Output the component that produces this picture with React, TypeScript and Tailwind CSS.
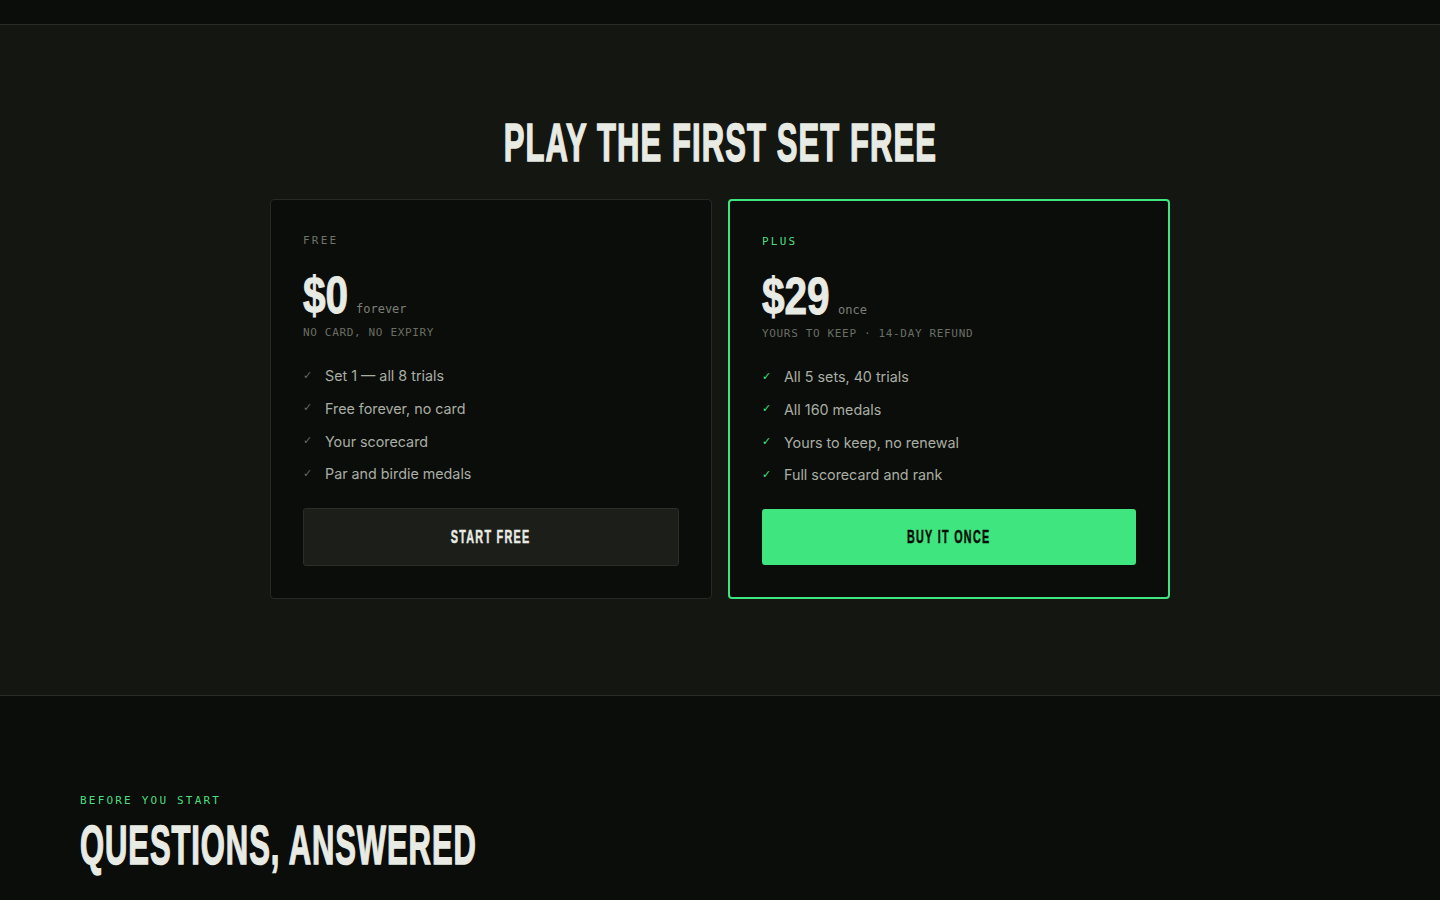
import React from "react";

const MONO = "font-['DejaVu_Sans_Mono','Liberation_Mono',monospace]";
const BODY = "font-['Inter','Noto_Sans',sans-serif]";
const DISPLAY = "font-['Liberation_Sans',Arial,sans-serif] font-bold";

function Feature({ text, plus }: { text: string; plus?: boolean }) {
  return (
    <li className="flex items-center h-6">
      <span
        className={`w-[22px] shrink-0 text-[11px] ${plus ? "text-[#3fe57f]" : "text-[#666a61]"} font-['DejaVu_Sans',sans-serif]`}
      >
        ✓
      </span>
      <span className={`${BODY} text-[14.3px] text-[#a9ada4]`}>{text}</span>
    </li>
  );
}

export default function App() {
  return (
    <div className="min-h-screen bg-[#0b0d0a] text-[#e8ebe3]">
      <div className="h-[25px] bg-[#0b0d0a] border-b border-[#2a2c27]" />

      <section className="bg-[#141611] border-b border-[#2a2c27] pt-[90px] pb-[96px]">
        <h2 className="text-center leading-none mb-[30px] h-[54px] flex justify-center items-center">
          <span
            className={`${DISPLAY} inline-block text-[53px] leading-none tracking-[0.035em] scale-x-[0.585] whitespace-nowrap [-webkit-text-stroke:1.5px_#e8ebe3]`}
          >
            PLAY THE FIRST SET FREE
          </span>
        </h2>

        <div className="mx-auto w-[900px] grid grid-cols-2 gap-4 items-stretch">
          {/* FREE */}
          <div className="bg-[#0b0d0a] border border-[#272a24] rounded-[4px] px-8 pt-[33px] pb-8">
            <div className={`${MONO} text-[11px] leading-4 tracking-[0.2em] text-[#6f7369]`}>FREE</div>
            <div className="mt-[20px] flex items-end h-[52px] leading-none">
              <span className="inline-block w-[45px] text-[52px] leading-none whitespace-nowrap">
                <span className={`${DISPLAY} inline-block origin-left scale-x-[0.78] [-webkit-text-stroke:1px_#e8ebe3]`}>$0</span>
              </span>
              <span className={`${MONO} ml-2 mb-[6px] text-[12px] leading-none text-[#7b7f76]`}>forever</span>
            </div>
            <div className={`${MONO} mt-[4px] text-[11px] leading-4 tracking-[0.06em] text-[#6a6e65]`}>
              NO CARD, NO EXPIRY
            </div>
            <ul className="mt-[23px] flex flex-col gap-[8.7px]">
              <Feature text="Set 1 — all 8 trials" />
              <Feature text="Free forever, no card" />
              <Feature text="Your scorecard" />
              <Feature text="Par and birdie medals" />
            </ul>
            <button className="mt-[22px] w-full h-[58px] rounded-[3px] bg-[#1b1e19] border border-[#2c2f29] flex items-center justify-center">
              <span className={`${DISPLAY} inline-block text-[18px] tracking-[0.12em] scale-x-[0.6] whitespace-nowrap text-[#e8ebe3] [-webkit-text-stroke:0.5px_#e8ebe3]`}>
                START FREE
              </span>
            </button>
          </div>

          {/* PLUS */}
          <div className="bg-[#0b0d0a] border-2 border-[#3fe57f] rounded-[4px] px-8 pt-[33px] pb-8">
            <div className={`${MONO} text-[11px] leading-4 tracking-[0.2em] text-[#4ade80]`}>PLUS</div>
            <div className="mt-[20px] flex items-end h-[52px] leading-none">
              <span className="inline-block w-[68px] text-[52px] leading-none whitespace-nowrap">
                <span className={`${DISPLAY} inline-block origin-left scale-x-[0.78] [-webkit-text-stroke:1px_#e8ebe3]`}>$29</span>
              </span>
              <span className={`${MONO} ml-2 mb-[6px] text-[12px] leading-none text-[#7b7f76]`}>once</span>
            </div>
            <div className={`${MONO} mt-[4px] text-[11px] leading-4 tracking-[0.06em] text-[#6a6e65]`}>
              YOURS TO KEEP · 14-DAY REFUND
            </div>
            <ul className="mt-[23px] flex flex-col gap-[8.7px]">
              <Feature plus text="All 5 sets, 40 trials" />
              <Feature plus text="All 160 medals" />
              <Feature plus text="Yours to keep, no renewal" />
              <Feature plus text="Full scorecard and rank" />
            </ul>
            <button className="mt-[22px] w-full h-[56px] rounded-[3px] bg-[#3fe57f] flex items-center justify-center">
              <span className={`${DISPLAY} inline-block text-[18px] tracking-[0.12em] scale-x-[0.6] whitespace-nowrap text-[#0b0d0a] [-webkit-text-stroke:0.5px_#0b0d0a]`}>
                BUY IT ONCE
              </span>
            </button>
          </div>
        </div>
      </section>

      <section className="px-20 pt-[97px] pb-10">
        <div className={`${MONO} text-[11px] leading-4 tracking-[0.2em] text-[#4ade80]`}>BEFORE YOU START</div>
        <h2 className="mt-2 leading-none">
          <span
            className={`${DISPLAY} inline-block origin-left text-[56px] leading-none tracking-[0.03em] scale-x-[0.553] whitespace-nowrap [-webkit-text-stroke:1.5px_#e8ebe3]`}
          >
            QUESTIONS, ANSWERED
          </span>
        </h2>
      </section>
    </div>
  );
}
